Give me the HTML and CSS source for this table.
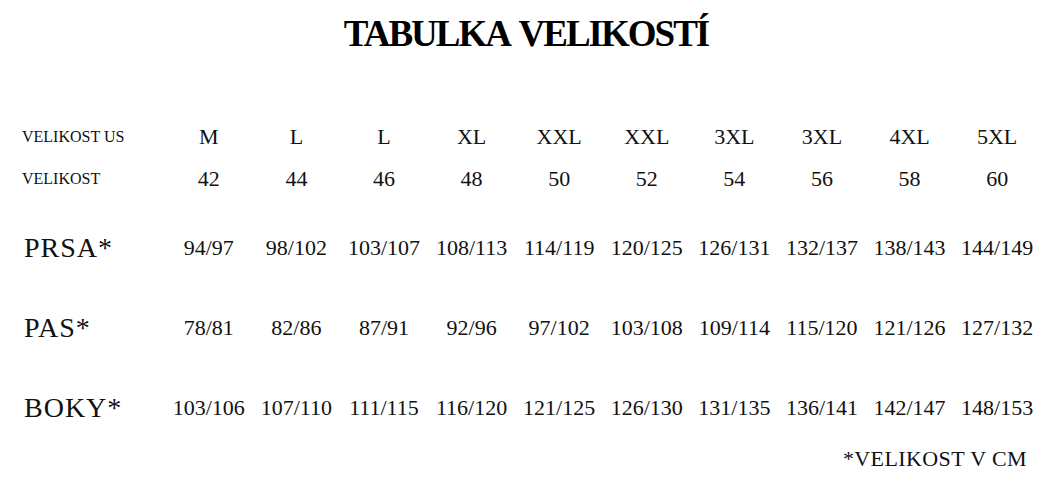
FILE: index.html
```html
<!DOCTYPE html>
<html lang="cs">
<head>
<meta charset="utf-8">
<title>Tabulka velikostí</title>
<link rel="stylesheet" href="styles.css">
</head>
<body>
<main class="page">
  <h1 class="title">TABULKA VELIKOSTÍ</h1>
  <div class="chart">
    <div class="row row-head">
      <div class="label label-small">VELIKOST US</div>
      <div class="cell">M</div><div class="cell">L</div><div class="cell">L</div><div class="cell">XL</div><div class="cell">XXL</div><div class="cell">XXL</div><div class="cell">3XL</div><div class="cell">3XL</div><div class="cell">4XL</div><div class="cell">5XL</div>
    </div>
    <div class="row row-head">
      <div class="label label-small">VELIKOST</div>
      <div class="cell">42</div><div class="cell">44</div><div class="cell">46</div><div class="cell">48</div><div class="cell">50</div><div class="cell">52</div><div class="cell">54</div><div class="cell">56</div><div class="cell">58</div><div class="cell">60</div>
    </div>
    <div class="measures">
      <div class="row row-measure">
        <div class="label label-big">PRSA*</div>
        <div class="cell">94/97</div><div class="cell">98/102</div><div class="cell">103/107</div><div class="cell">108/113</div><div class="cell">114/119</div><div class="cell">120/125</div><div class="cell">126/131</div><div class="cell">132/137</div><div class="cell">138/143</div><div class="cell">144/149</div>
      </div>
      <div class="row row-measure">
        <div class="label label-big">PAS*</div>
        <div class="cell">78/81</div><div class="cell">82/86</div><div class="cell">87/91</div><div class="cell">92/96</div><div class="cell">97/102</div><div class="cell">103/108</div><div class="cell">109/114</div><div class="cell">115/120</div><div class="cell">121/126</div><div class="cell">127/132</div>
      </div>
      <div class="row row-measure">
        <div class="label label-big">BOKY*</div>
        <div class="cell">103/106</div><div class="cell">107/110</div><div class="cell">111/115</div><div class="cell">116/120</div><div class="cell">121/125</div><div class="cell">126/130</div><div class="cell">131/135</div><div class="cell">136/141</div><div class="cell">142/147</div><div class="cell">148/153</div>
      </div>
    </div>
  </div>
  <p class="note">*VELIKOST V CM</p>
</main>
</body>
</html>
```

FILE: styles.css
```css
html, body {
  margin: 0;
  padding: 0;
  background: #ffffff;
}

body {
  font-family: "Liberation Serif", "Times New Roman", serif;
  color: #111111;
  width: 1050px;
  height: 480px;
  overflow: hidden;
}

.page {
  display: flex;
  flex-direction: column;
}

.title {
  margin: 12px 0 0 0;
  height: 44px;
  line-height: 44px;
  font-size: 37px;
  font-weight: 700;
  letter-spacing: -2px;
  word-spacing: 4px;
  text-align: center;
  color: #000000;
  padding-left: 2px;
}

.chart {
  margin-top: 60px;
  padding-left: 22px;
  display: flex;
  flex-direction: column;
}

.measures {
  margin-top: 8px;
  display: flex;
  flex-direction: column;
}

.row {
  display: grid;
  grid-template-columns: 143px repeat(10, 87.6px);
  align-items: center;
}

.row-head {
  height: 42px;
}

.row-measure {
  height: 80px;
}

.label {
  white-space: nowrap;
}

.label-small {
  font-size: 16px;
  line-height: 20px;
}

.label-big {
  font-size: 28px;
  line-height: 32px;
  letter-spacing: 1px;
  padding-left: 2px;
}

.cell {
  text-align: center;
  font-size: 22px;
  line-height: 26px;
  white-space: nowrap;
}

.note {
  margin: 0;
  height: 22px;
  line-height: 22px;
  font-size: 22px;
  text-align: right;
  padding-right: 23px;
  letter-spacing: 0.4px;
}
```
